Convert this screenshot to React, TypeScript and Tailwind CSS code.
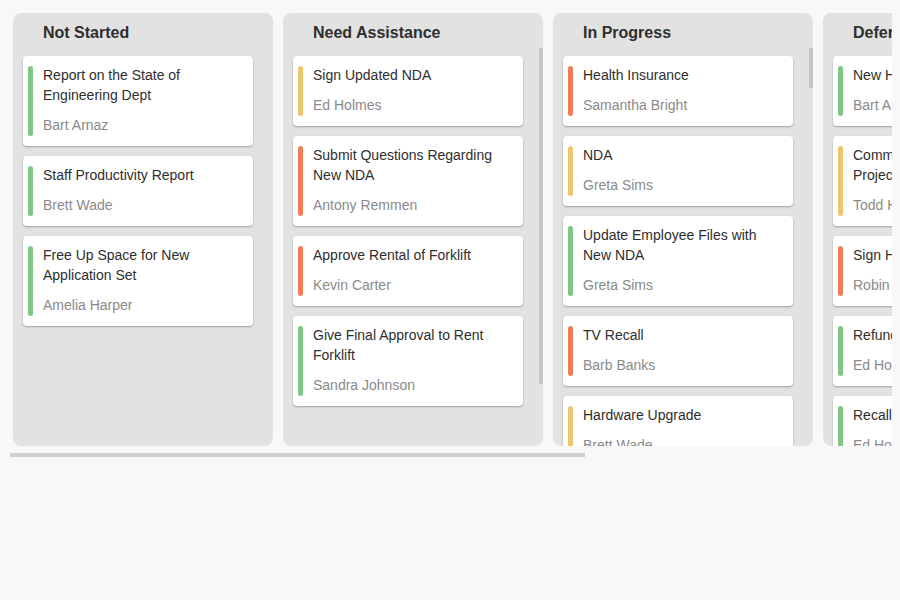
import React from "react";

type Task = { title: string; owner: string; tone: "green" | "yellow" | "red" };
type Column = { name: string; thumb: string | null; tasks: Task[] };

const toneBar: Record<Task["tone"], string> = {
  green: "bg-[#80c684]",
  yellow: "bg-[#efc46f]",
  red: "bg-[#f07d57]",
};

const columns: Column[] = [
  {
    name: "Not Started",
    thumb: null,
    tasks: [
      { title: "Report on the State of Engineering Dept", owner: "Bart Arnaz", tone: "green" },
      { title: "Staff Productivity Report", owner: "Brett Wade", tone: "green" },
      { title: "Free Up Space for New Application Set", owner: "Amelia Harper", tone: "green" },
    ],
  },
  {
    name: "Need Assistance",
    thumb: "h-[336px]",
    tasks: [
      { title: "Sign Updated NDA", owner: "Ed Holmes", tone: "yellow" },
      { title: "Submit Questions Regarding New NDA", owner: "Antony Remmen", tone: "red" },
      { title: "Approve Rental of Forklift", owner: "Kevin Carter", tone: "red" },
      { title: "Give Final Approval to Rent Forklift", owner: "Sandra Johnson", tone: "green" },
    ],
  },
  {
    name: "In Progress",
    thumb: "h-[40px]",
    tasks: [
      { title: "Health Insurance", owner: "Samantha Bright", tone: "red" },
      { title: "NDA", owner: "Greta Sims", tone: "yellow" },
      { title: "Update Employee Files with New NDA", owner: "Greta Sims", tone: "green" },
      { title: "TV Recall", owner: "Barb Banks", tone: "red" },
      { title: "Hardware Upgrade", owner: "Brett Wade", tone: "yellow" },
      { title: "Sales Presentation", owner: "Kevin Carter", tone: "green" },
    ],
  },
  {
    name: "Deferred",
    thumb: "h-[60px]",
    tasks: [
      { title: "New Hire Orientation", owner: "Bart Arnaz", tone: "green" },
      { title: "Comment on Revenue Projections", owner: "Todd Hoffman", tone: "yellow" },
      { title: "Sign HIPAA Form", owner: "Robin Cosworth", tone: "red" },
      { title: "Refund Request", owner: "Ed Holmes", tone: "green" },
      { title: "Recall Rebate Form", owner: "Ed Holmes", tone: "green" },
    ],
  },
  {
    name: "Completed",
    thumb: "h-[80px]",
    tasks: [
      { title: "Prepare 2024 Marketing Plan", owner: "Cindy Stanwick", tone: "green" },
      { title: "Update Personnel Files", owner: "Greta Sims", tone: "yellow" },
    ],
  },
];

function Card({ task }: { task: Task }) {
  return (
    <div className="flex shrink-0 rounded bg-white py-[10px] pl-[5px] pr-3 shadow-[0_1px_2px_rgba(0,0,0,0.3)]">
      <div className={`w-[5px] shrink-0 rounded-full ${toneBar[task.tone]}`} />
      <div className="ml-[10px] min-w-0 flex-1 -translate-y-px">
        <div className="text-[14px] leading-[20px] text-[#2e2e2e]">{task.title}</div>
        <div className="mt-[10px] text-[14px] leading-[20px] text-[#8a8a8a]">{task.owner}</div>
      </div>
    </div>
  );
}

function BoardColumn({ column }: { column: Column }) {
  return (
    <div className="flex h-[433px] w-[260px] shrink-0 flex-col overflow-hidden rounded-lg bg-[#e2e2e2]">
      <div className="pb-[5px] pl-[30px] pt-[10px] text-[16px] font-bold leading-[20px] text-[#2e2e2e]">
        {column.name}
      </div>
      <div className="flex min-h-0 flex-1">
        <div className="flex min-w-0 flex-1 flex-col gap-[10px] overflow-hidden pl-[10px] pr-[16px] pt-2">
          {column.tasks.map((t, i) => (
            <Card key={i} task={t} />
          ))}
        </div>
        <div className="w-[4px] shrink-0">
          {column.thumb && <div className={`w-[4px] bg-[#c6c6c6] ${column.thumb}`} />}
        </div>
      </div>
    </div>
  );
}

export default function App() {
  return (
    <div className="h-[600px] w-[900px] bg-[#f8f8f8] pl-[10px] pt-[10px] font-['Liberation_Sans',Arial,sans-serif]">
      <div className="w-[882px] overflow-hidden">
        <div className="flex gap-[10px] pl-[3px] pt-[3px]">
          {columns.map((c) => (
            <BoardColumn key={c.name} column={c} />
          ))}
        </div>
      </div>
      <div className="mt-[7px] h-[4px] w-[575px] bg-[#cfcfcf]" />
    </div>
  );
}
